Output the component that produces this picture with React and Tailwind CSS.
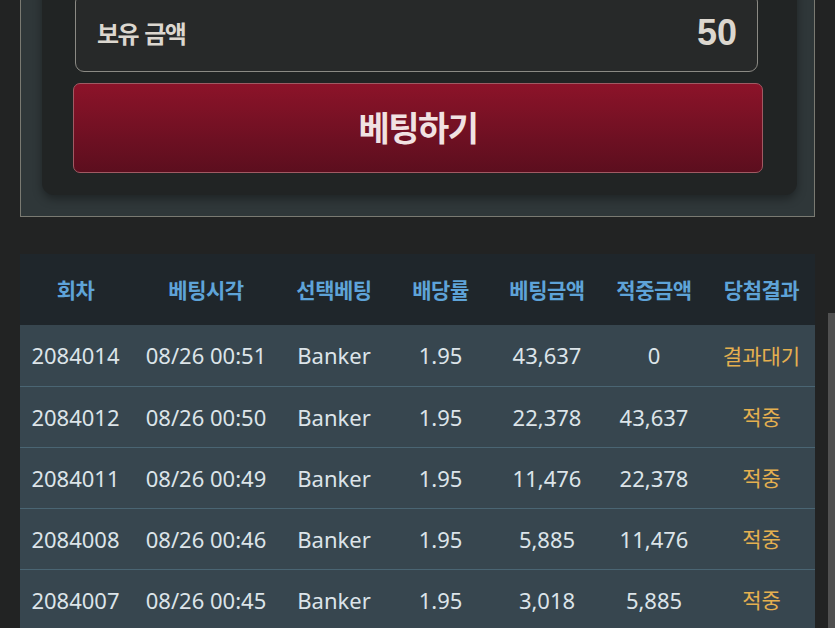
import React from "react";

const rows = [
  ["2084014", "08/26 00:51", "Banker", "1.95", "43,637", "0", "결과대기"],
  ["2084012", "08/26 00:50", "Banker", "1.95", "22,378", "43,637", "적중"],
  ["2084011", "08/26 00:49", "Banker", "1.95", "11,476", "22,378", "적중"],
  ["2084008", "08/26 00:46", "Banker", "1.95", "5,885", "11,476", "적중"],
  ["2084007", "08/26 00:45", "Banker", "1.95", "3,018", "5,885", "적중"],
];

const heads = ["회차", "베팅시각", "선택베팅", "배당률", "베팅금액", "적중금액", "당첨결과"];

const cols = "grid grid-cols-[111px_150px_106px_107px_106px_108px_107px]";

export default function App() {
  return (
    <div className="relative h-[628px] w-[835px] overflow-hidden bg-[#222323] [font-family:'Noto_Sans','Noto_Sans_CJK_KR',sans-serif]">
      <div className="mx-[20px] -mt-[40px] w-[795px] border border-[#7a7a72] bg-[#2f3739] pb-[21px] pl-[21px] pr-[17px]">
        <div className="rounded-b-[12px] bg-[#212424] pb-[22px] pl-[31px] pr-[34px] pt-[32px] shadow-[0_4px_10px_rgba(0,0,0,0.35)]">
          <div className="ml-[2px] mr-[5px] flex h-[79px] items-center justify-between rounded-[9px] border border-[#8b8a84] bg-[#272929] pl-[21px] pr-[20px]">
            <span className="flex gap-[6px] pt-[1px] text-[24px] font-bold tracking-[-1.5px] text-[#dcd7cf] [font-family:'Noto_Sans_CJK_KR',sans-serif]">
              <span>보유</span>
              <span>금액</span>
            </span>
            <span className="text-[36px] font-bold text-[#dcd7cf] [font-family:'Liberation_Sans',sans-serif]">
              50
            </span>
          </div>
          <div className="mt-[11px] flex h-[90px] items-center justify-center rounded-[7px] border border-[#a05a63] bg-gradient-to-b from-[#8c1329] to-[#5c0e1e]">
            <span className="pb-[4px] text-[34px] font-bold tracking-[-1.5px] text-[#f1e2e2] [font-family:'Noto_Sans_CJK_KR',sans-serif]">
              베팅하기
            </span>
          </div>
        </div>
      </div>

      <div className="ml-[20px] mt-[37px] w-[795px]">
        <div className={`${cols} h-[71px] items-center bg-[#1f262b]`}>
          {heads.map((h) => (
            <div
              key={h}
              className="text-center text-[21px] font-bold tracking-[-0.5px] text-[#5ea3d8] [font-family:'Noto_Sans_CJK_KR',sans-serif]"
            >
              {h}
            </div>
          ))}
        </div>
        {rows.map((r, i) => (
          <div
            key={r[0]}
            className={`${cols} h-[61px] items-center bg-[#37464f] ${i > 0 ? "border-t border-[#4a6573]" : ""}`}
          >
            {r.map((c, j) =>
              j === 6 ? (
                <div
                  key={j}
                  className="text-center text-[21px] text-[#e5b04f] [font-family:'Noto_Sans_CJK_KR',sans-serif]"
                >
                  {c}
                </div>
              ) : (
                <div key={j} className="text-center text-[22px] text-[#dce4e9]">
                  {c}
                </div>
              )
            )}
          </div>
        ))}
      </div>

      <div className="absolute left-[828px] top-[313px] h-[320px] w-[7px] bg-[#505050]" />
    </div>
  );
}
